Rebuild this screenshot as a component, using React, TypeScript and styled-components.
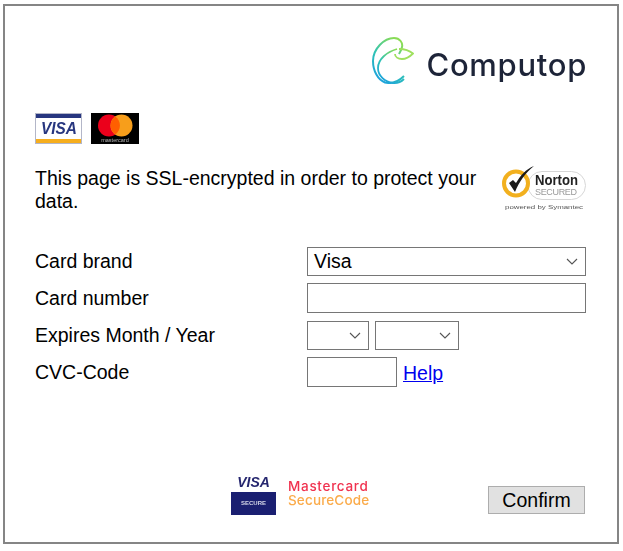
import React from "react";
import styled, { createGlobalStyle } from "styled-components";

const Global = createGlobalStyle`
  html, body { margin: 0; padding: 0; background: #fff; }
  body { font-family: "Liberation Sans", Arial, sans-serif; color: #000; }
  * { box-sizing: border-box; }
`;

const Frame = styled.div`
  width: 616px;
  height: 540px;
  margin: 4px 0 0 3px;
  border: 2px solid #858585;
  padding: 24px 32px 0 30px;
  display: flex;
  flex-direction: column;
`;

const LogoRow = styled.div`
  height: 60px;
  display: flex;
  justify-content: flex-end;
  align-items: center;
  gap: 12px;
  filter: blur(0.35px);
`;

const LogoWord = styled.span`
  font-family: Inter, "Open Sans", sans-serif;
  font-size: 31px;
  font-weight: 500;
  letter-spacing: 0.7px;
  color: #1d2438;
  line-height: 1;
  margin: 8px -2px 0 0;
`;

const CardRow = styled.div`
  margin-top: 23px;
  height: 31px;
  display: flex;
  gap: 9px;
  align-items: center;
  filter: blur(0.35px);
`;

const NoticeRow = styled.div`
  margin-top: 19px;
  height: 50px;
  display: flex;
  justify-content: space-between;
  align-items: flex-start;
`;

const Notice = styled.p`
  margin: 4px 0 0;
  width: 455px;
  font-size: 19.5px;
  line-height: 23px;
`;

const Form = styled.div`
  margin-top: 33px;
  display: grid;
  grid-template-columns: 272px 279px;
  grid-auto-rows: 37px;
`;

const Label = styled.label`
  font-size: 19.5px;
  line-height: 28px;
  padding-top: 1px;
`;

const Field = styled.div`
  display: flex;
  gap: 6px;
  align-items: flex-start;
`;

const SelectBox = styled.div<{ $width: number }>`
  width: ${(p) => p.$width}px;
  height: 29px;
  margin-top: 1px;
  border: 1px solid #767676;
  background: #fff;
  display: flex;
  align-items: center;
  justify-content: space-between;
  padding: 0 7px 0 6px;
  font-size: 19.5px;
`;

const TextBox = styled.div<{ $width: number }>`
  width: ${(p) => p.$width}px;
  height: 30px;
  border: 1px solid #767676;
  background: #fff;
`;

const HelpLink = styled.a`
  font-size: 19.5px;
  color: #0000ee;
  text-decoration: underline;
  line-height: 32px;
`;

const Footer = styled.div`
  margin-top: 80px;
  display: flex;
  align-items: flex-start;
`;

const Secure = styled.div`
  margin-left: 196px;
  display: flex;
  gap: 12px;
  align-items: flex-start;
  filter: blur(0.35px);
`;

const VisaSecure = styled.div`
  width: 45px;
  display: flex;
  flex-direction: column;
  align-items: center;
`;

const VisaMini = styled.span`
  font-family: "Liberation Sans", sans-serif;
  font-style: italic;
  font-weight: 700;
  font-size: 14px;
  line-height: 16px;
  height: 18px;
  color: #26276f;
`;

const SecureBadge = styled.span`
  width: 45px;
  height: 23px;
  background: #1a1f71;
  color: #d5d6e8;
  font-size: 6px;
  font-weight: 700;
  line-height: 23px;
  text-align: center;
`;

const CodeText = styled.div`
  font-family: Inter, sans-serif;
  font-size: 13.5px;
  font-weight: 500;
  line-height: 14px;
  margin-top: 5px;
`;

const CodeLine = styled.div<{ $color: string; $spacing: number }>`
  color: ${(p) => p.$color};
  letter-spacing: ${(p) => p.$spacing}px;
`;

const Confirm = styled.button`
  margin-left: auto;
  margin-top: 12px;
  width: 97px;
  height: 28px;
  padding: 0;
  border: 1px solid #adadad;
  background: #e1e1e1;
  font-family: "Liberation Sans", sans-serif;
  font-size: 19.5px;
  color: #000;
`;

const Chevron = () => (
  <svg width="12" height="7" viewBox="0 0 12 7" fill="none">
    <path d="M1 1l5 5 5-5" stroke="#555" strokeWidth="1.1" />
  </svg>
);

const ComputopMark = () => (
  <svg width="42" height="47" viewBox="0 0 42 47" fill="none">
    <defs>
      <linearGradient id="cg" x1="0.7" y1="0" x2="0.2" y2="1">
        <stop offset="0" stopColor="#8bdc55" />
        <stop offset="0.5" stopColor="#2fc3b4" />
        <stop offset="1" stopColor="#1b9fe0" />
      </linearGradient>
    </defs>
    <path d="M32 39C26 45 19 47 13 45.500 6 43 1 34 1 24 1 12 12 1 22 1c6 0 9 5 8 9-.5 3-2 5-3 7" stroke="url(#cg)" strokeWidth="2" />
    <path d="M27 12c5 0 11 2 14 4.500-3 3-7 5.500-11 5.500-4 0-7-2-7-5" stroke="#9fe05e" strokeWidth="1.800" />
    <path d="M25 12C15 15 6 22 6 31c0 8 7 14 15 15 5 .5 9-2 11-4" stroke="url(#cg)" strokeWidth="1.800" />
  </svg>
);

const VisaCard = () => (
  <svg width="47" height="31" viewBox="0 0 47 31">
    <rect x="0.5" y="0.5" width="46" height="30" fill="#fff" stroke="#b3b6c8" />
    <rect x="1" y="1" width="45" height="4" fill="#27367f" />
    <rect x="1" y="26" width="45" height="4" fill="#f6ae1d" />
    <text x="6" y="21" fontFamily="Liberation Sans" fontStyle="italic" fontWeight="700" fontSize="17" fill="#27367f" textLength="36" lengthAdjust="spacingAndGlyphs">VISA</text>
  </svg>
);

const MastercardCard = () => (
  <svg width="48" height="31" viewBox="0 0 48 31">
    <rect width="48" height="31" fill="#000" />
    <circle cx="18" cy="12.500" r="11" fill="#eb001b" />
    <circle cx="30.500" cy="12.500" r="11" fill="#f79e1b" />
    <path d="M24.250 3.500a11 11 0 0 1 0 18 11 11 0 0 1 0-18z" fill="#ff5f00" />
    <text x="24" y="28.500" textAnchor="middle" fontFamily="Liberation Sans" fontSize="5.500" fill="#bbb">mastercard</text>
  </svg>
);

const NortonSeal = styled.svg`
  filter: blur(0.4px);
  flex: none;
  margin-right: -1px;
`;

const Norton = () => (
  <NortonSeal width="85" height="48" viewBox="0 0 85 48">
    <rect x="27" y="8.500" width="57.500" height="28" rx="14" fill="#fff" stroke="#d6d6d6" />
    <circle cx="15" cy="20.500" r="12" fill="#fff" stroke="#f2b01e" strokeWidth="4" />
    <path d="M8 20l6 9C18 19 25 9 33 3c-8 3-14 10-18 17l-3-3z" fill="#1a1a1a" />
    <text x="34" y="22" fontFamily="Liberation Sans" fontWeight="700" fontSize="15" fill="#222" textLength="43" lengthAdjust="spacingAndGlyphs">Norton</text>
    <text x="34" y="32" fontFamily="Liberation Sans" fontSize="9" fill="#999" textLength="42">SECURED</text>
    <text x="4" y="46" fontFamily="Liberation Sans" fontSize="6" fill="#555" textLength="78" lengthAdjust="spacingAndGlyphs">powered by Symantec</text>
  </NortonSeal>
);

export default function App() {
  return (
    <>
      <Global />
      <Frame>
        <LogoRow>
          <ComputopMark />
          <LogoWord>Computop</LogoWord>
        </LogoRow>
        <CardRow>
          <VisaCard />
          <MastercardCard />
        </CardRow>
        <NoticeRow>
          <Notice>This page is SSL-encrypted in order to protect your data.</Notice>
          <Norton />
        </NoticeRow>
        <Form>
          <Label>Card brand</Label>
          <Field>
            <SelectBox $width={279}>
              Visa
              <Chevron />
            </SelectBox>
          </Field>
          <Label>Card number</Label>
          <Field>
            <TextBox $width={279} />
          </Field>
          <Label>Expires Month / Year</Label>
          <Field>
            <SelectBox $width={62}>
              <span />
              <Chevron />
            </SelectBox>
            <SelectBox $width={84}>
              <span />
              <Chevron />
            </SelectBox>
          </Field>
          <Label>CVC-Code</Label>
          <Field>
            <TextBox $width={90} />
            <HelpLink href="#">Help</HelpLink>
          </Field>
        </Form>
        <Footer>
          <Secure>
            <VisaSecure>
              <VisaMini>VISA</VisaMini>
              <SecureBadge>SECURE</SecureBadge>
            </VisaSecure>
            <CodeText>
              <CodeLine $color="#f0324f" $spacing={0.7}>Mastercard</CodeLine>
              <CodeLine $color="#fbab4a" $spacing={0.15}>SecureCode</CodeLine>
            </CodeText>
          </Secure>
          <Confirm>Confirm</Confirm>
        </Footer>
      </Frame>
    </>
  );
}
